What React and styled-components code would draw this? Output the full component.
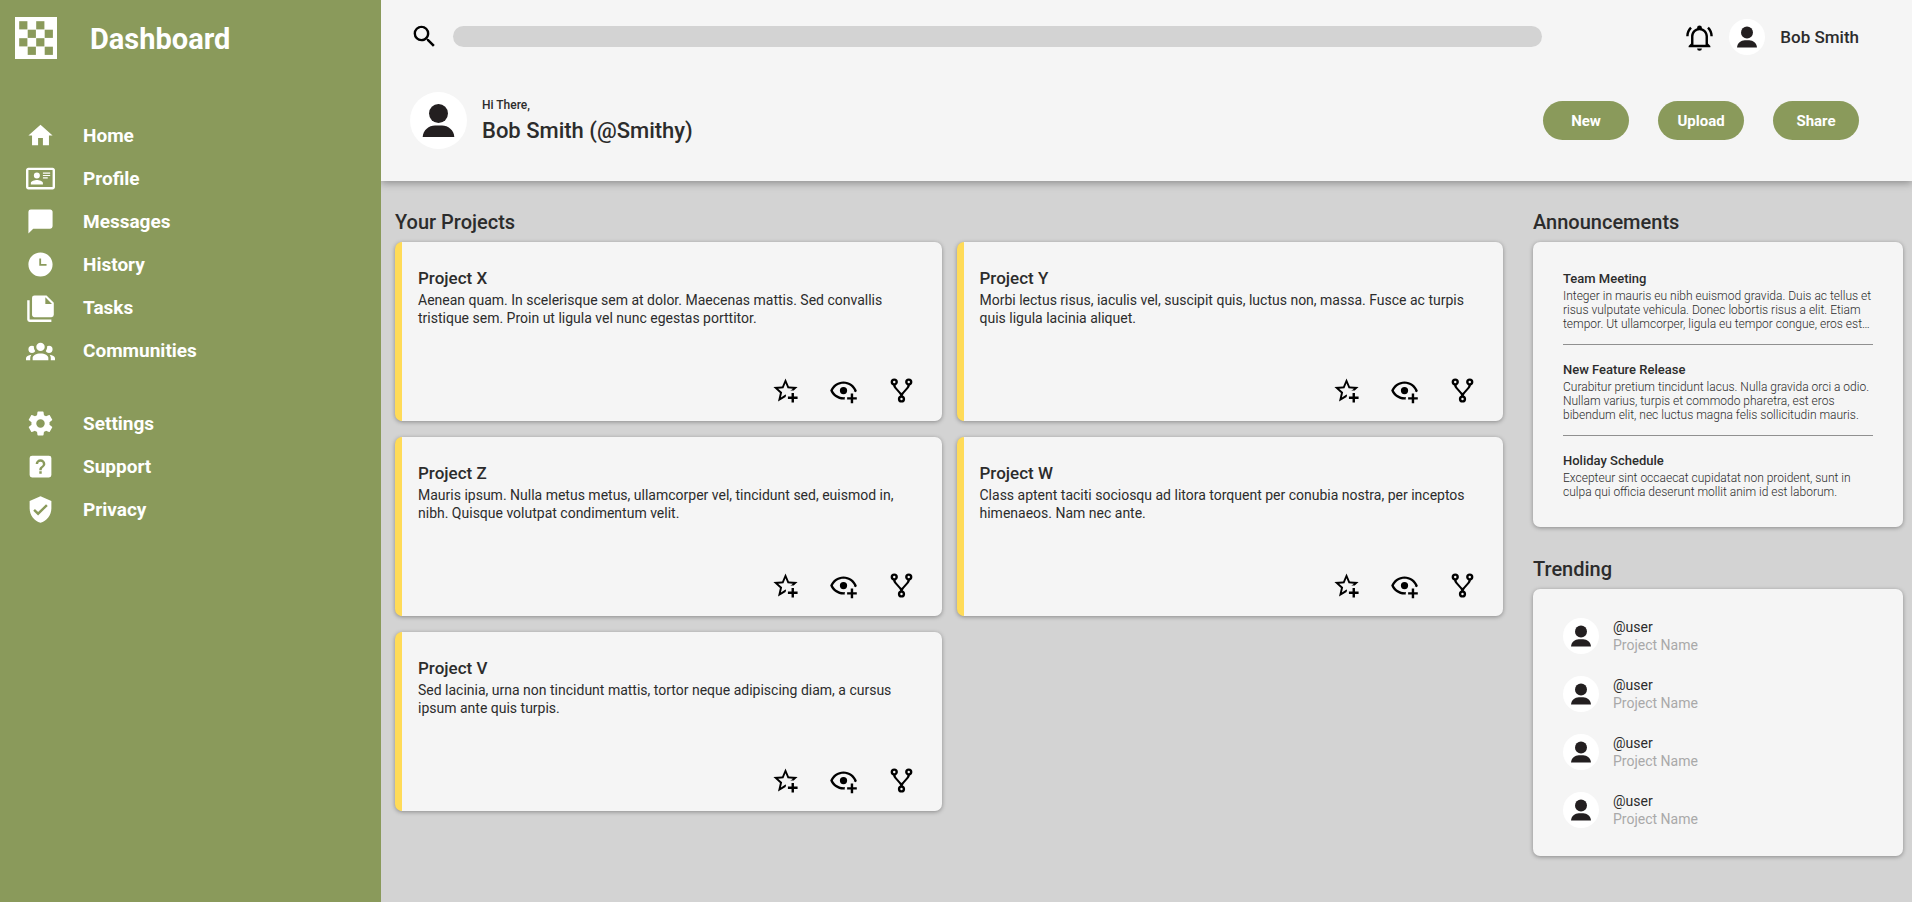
import React from "react";
import styled, { createGlobalStyle } from "styled-components";

const GlobalStyle = createGlobalStyle`
  *, *::before, *::after { box-sizing: border-box; }
  body {
    margin: 0;
    background: #d3d3d3;
    color: #2c2c2c;
    font-family: Roboto, "Liberation Sans", sans-serif;
    font-size: 14px;
  }
  h1, h2, h3, p, ul { margin: 0; padding: 0; }
  ul { list-style: none; }
  button { font: inherit; border: 0; padding: 0; background: none; color: inherit; cursor: pointer; }
`;

const paths = {
  home: "M10,20V14H14V20H19V12H22L12,3L2,12H5V20H10Z",
  profile:
    "M22,3H2C0.91,3.04 0.04,3.91 0,5V19C0.04,20.09 0.91,20.96 2,21H22C23.09,20.96 23.96,20.09 24,19V5C23.96,3.91 23.09,3.04 22,3M22,19H2V5H22V19M14,17V15.75C14,14.09 10.66,13.25 9,13.25C7.34,13.25 4,14.09 4,15.75V17H14M9,7A2.5,2.5 0 0,0 6.5,9.5A2.5,2.5 0 0,0 9,12A2.5,2.5 0 0,0 11.5,9.5A2.5,2.5 0 0,0 9,7M14,7V8H20V7H14M14,9V10H20V9H14M14,11V12H18V11H14",
  message: "M20,2H4A2,2 0 0,0 2,4V22L6,18H20A2,2 0 0,0 22,16V4C22,2.89 21.1,2 20,2Z",
  clock:
    "M12 2C6.5 2 2 6.5 2 12C2 17.5 6.5 22 12 22C17.5 22 22 17.5 22 12S17.5 2 12 2M17 13H11V7H12.5V11.5H17V13Z",
  tasks:
    "M16,9H21.5L16,3.5V9M7,2H17L23,8V18A2,2 0 0,1 21,20H7C5.89,20 5,19.1 5,18V4A2,2 0 0,1 7,2M3,6V22H21V24H3A2,2 0 0,1 1,22V6H3Z",
  group:
    "M12,5.5A3.5,3.5 0 0,1 15.5,9A3.5,3.5 0 0,1 12,12.5A3.5,3.5 0 0,1 8.5,9A3.5,3.5 0 0,1 12,5.5M5,8C5.56,8 6.08,8.15 6.53,8.42C6.38,9.85 6.8,11.27 7.66,12.38C7.16,13.34 6.16,14 5,14A3,3 0 0,1 2,11A3,3 0 0,1 5,8M19,8A3,3 0 0,1 22,11A3,3 0 0,1 19,14C17.84,14 16.84,13.34 16.34,12.38C17.2,11.27 17.62,9.85 17.47,8.42C17.92,8.15 18.44,8 19,8M5.5,18.25C5.5,16.18 8.41,14.5 12,14.5C15.59,14.5 18.5,16.18 18.5,18.25V20H5.5V18.25M0,20V18.5C0,17.11 1.89,15.94 4.45,15.6C3.86,16.28 3.5,17.22 3.5,18.25V20H0M24,20H20.5V18.25C20.5,17.22 20.14,16.28 19.55,15.6C22.11,15.94 24,17.11 24,18.5V20Z",
  cog: "M12,15.5A3.5,3.5 0 0,1 8.5,12A3.5,3.5 0 0,1 12,8.5A3.5,3.5 0 0,1 15.5,12A3.5,3.5 0 0,1 12,15.5M19.43,12.97C19.47,12.65 19.5,12.33 19.5,12C19.5,11.67 19.47,11.34 19.43,11L21.54,9.37C21.73,9.22 21.78,8.95 21.66,8.73L19.66,5.27C19.54,5.05 19.27,4.96 19.05,5.05L16.56,6.05C16.04,5.66 15.5,5.32 14.87,5.07L14.5,2.42C14.46,2.18 14.25,2 14,2H10C9.75,2 9.54,2.18 9.5,2.42L9.13,5.07C8.5,5.32 7.96,5.66 7.44,6.05L4.95,5.05C4.73,4.96 4.46,5.05 4.34,5.27L2.34,8.73C2.21,8.95 2.27,9.22 2.46,9.37L4.57,11C4.53,11.34 4.5,11.67 4.5,12C4.5,12.33 4.53,12.65 4.57,12.97L2.46,14.63C2.27,14.78 2.21,15.05 2.34,15.27L4.34,18.73C4.46,18.95 4.73,19.03 4.95,18.95L7.44,17.94C7.96,18.34 8.5,18.68 9.13,18.93L9.5,21.58C9.54,21.82 9.75,22 10,22H14C14.25,22 14.46,21.82 14.5,21.58L14.87,18.93C15.5,18.67 16.04,18.34 16.56,17.94L19.05,18.95C19.27,19.03 19.54,18.95 19.66,18.73L21.66,15.27C21.78,15.05 21.73,14.78 21.54,14.63L19.43,12.97Z",
  help: "M11,18H13V16H11V18M12,6A4,4 0 0,0 8,10H10A2,2 0 0,1 12,8A2,2 0 0,1 14,10C14,12 11,11.75 11,15H13C13,12.75 16,12.5 16,10A4,4 0 0,0 12,6M5,3H19A2,2 0 0,1 21,5V19A2,2 0 0,1 19,21H5A2,2 0 0,1 3,19V5A2,2 0 0,1 5,3Z",
  shield:
    "M10,17L6,13L7.41,11.59L10,14.17L16.59,7.58L18,9M12,1L3,5V11C3,16.55 6.84,21.74 12,23C17.16,21.74 21,16.55 21,11V5L12,1Z",
  search:
    "M9.5,3A6.5,6.5 0 0,1 16,9.5C16,11.11 15.41,12.59 14.44,13.73L14.71,14H15.5L20.5,19L19,20.5L14,15.5V14.71L13.73,14.44C12.59,15.41 11.11,16 9.5,16A6.5,6.5 0 0,1 3,9.5A6.5,6.5 0 0,1 9.5,3M9.5,5C7,5 5,7 5,9.5C5,12 7,14 9.5,14C12,14 14,12 14,9.5C14,7 12,5 9.5,5Z",
  bell: "M10,21H14A2,2 0 0,1 12,23A2,2 0 0,1 10,21M21,19V20H3V19L5,17V11C5,7.9 7.03,5.17 10,4.29C10,4.19 10,4.1 10,4A2,2 0 0,1 12,2A2,2 0 0,1 14,4C14,4.1 14,4.19 14,4.29C16.97,5.17 19,7.9 19,11V17L21,19M17,11A5,5 0 0,0 12,6A5,5 0 0,0 7,11V18H17V11M19.75,3.19L18.33,4.61C20.04,6.3 21,8.6 21,11H23C23,8.07 21.84,5.25 19.75,3.19M1,11H3C3,8.6 3.96,6.3 5.67,4.61L4.25,3.19C2.16,5.25 1,8.07 1,11Z",
  star: "M5.8 21L7.4 14L2 9.2L9.2 8.6L12 2L14.8 8.6L22 9.2L18.8 12H18C17.3 12 16.6 12.1 15.9 12.4L18.1 10.5L13.7 10.1L12 6.1L10.3 10.1L5.9 10.5L9.2 13.4L8.2 17.7L12 15.4L12.5 15.7C12.3 16.2 12.1 16.8 12.1 17.3L5.8 21M17 14V17H14V19H17V22H19V19H22V17H19V14H17Z",
  eye: "M12,4.5C7,4.5 2.73,7.61 1,12C2.73,16.39 7,19.5 12,19.5C12.36,19.5 12.72,19.5 13.08,19.45C13.03,19.13 13,18.82 13,18.5C13,18.14 13.04,17.78 13.1,17.42C12.74,17.46 12.37,17.5 12,17.5C8.24,17.5 4.83,15.36 3.18,12C4.83,8.64 8.24,6.5 12,6.5C15.76,6.5 19.17,8.64 20.82,12C20.7,12.24 20.56,12.45 20.43,12.68C21.09,12.84 21.72,13.11 22.29,13.5C22.56,13 22.8,12.5 23,12C21.27,7.61 17,4.5 12,4.5M12,9A3,3 0 0,0 9,12A3,3 0 0,0 12,15A3,3 0 0,0 15,12A3,3 0 0,0 12,9M18,14.5V17.5H15V19.5H18V22.5H20V19.5H23V17.5H20V14.5H18Z",
  fork: "M6,2A3,3 0 0,1 9,5C9,6.28 8.19,7.38 7.06,7.81C7.15,8.27 7.39,8.83 8,9.63C9,10.92 11,12.83 12,14.17C13,12.83 15,10.92 16,9.63C16.61,8.83 16.85,8.27 16.94,7.81C15.81,7.38 15,6.28 15,5A3,3 0 0,1 18,2A3,3 0 0,1 21,5C21,6.32 20.14,7.45 18.95,7.85C18.87,8.37 18.64,9 18,9.83C17,11.17 15,13.08 14,14.38C13.39,15.17 13.15,15.73 13.06,16.19C14.19,16.62 15,17.72 15,19A3,3 0 0,1 12,22A3,3 0 0,1 9,19C9,17.72 9.81,16.62 10.94,16.19C10.85,15.73 10.61,15.17 10,14.38C9,13.08 7,11.17 6,9.83C5.36,9 5.13,8.37 5.05,7.85C3.86,7.45 3,6.32 3,5A3,3 0 0,1 6,2M6,4A1,1 0 0,0 5,5A1,1 0 0,0 6,6A1,1 0 0,0 7,5A1,1 0 0,0 6,4M18,4A1,1 0 0,0 17,5A1,1 0 0,0 18,6A1,1 0 0,0 19,5A1,1 0 0,0 18,4M12,18A1,1 0 0,0 11,19A1,1 0 0,0 12,20A1,1 0 0,0 13,19A1,1 0 0,0 12,18Z",
};

const Svg = styled.svg`
  display: block;
  flex: none;
  width: 29px;
  height: 29px;
  fill: currentColor;
  fill-rule: evenodd;
`;

const Icon = ({ name }) => (
  <Svg viewBox="0 0 24 24" aria-hidden="true">
    <path d={paths[name]} />
  </Svg>
);

const Page = styled.div`
  display: flex;
  min-height: 100vh;
`;

const Sidebar = styled.aside`
  flex: 0 0 381px;
  background: #8a9a5b;
  color: #fff;
`;

const Brand = styled.div`
  display: flex;
  align-items: flex-start;
  gap: 33px;
  padding: 17px 15px 0;
`;

const Logo = styled.svg`
  display: block;
  width: 42px;
  height: 42px;
`;

const BrandName = styled.h1`
  font-size: 29px;
  line-height: 44px;
  font-weight: 700;
`;

const Nav = styled.nav`
  display: flex;
  flex-direction: column;
  gap: 44px;
  padding: 60px 26px;
`;

const NavGroup = styled.ul`
  display: flex;
  flex-direction: column;
  gap: 14px;
`;

const NavLink = styled.a`
  display: flex;
  align-items: center;
  gap: 28px;
  color: inherit;
  font-size: 19px;
  line-height: 29px;
  font-weight: 700;
  text-decoration: none;
`;

const Main = styled.main`
  flex: 1;
  min-width: 0;
`;

const Header = styled.header`
  position: relative;
  padding: 19px 53px 32px 29px;
  background: #f5f5f5;
  box-shadow: 0 2px 8px rgba(0, 0, 0, 0.35);
  clip-path: inset(0 0 -20px 0);
`;

const TopBar = styled.div`
  display: flex;
  align-items: flex-start;
  justify-content: space-between;
  gap: 29px;
`;

const Search = styled.label`
  display: flex;
  flex: 0 1 1132px;
  align-items: center;
  gap: 14px;
  height: 35px;
  color: #000;
`;

const SearchInput = styled.input`
  flex: 1;
  min-width: 0;
  height: 21px;
  padding: 0 14px;
  border: 0;
  border-radius: 14px;
  background: #d3d3d3;
  font: inherit;
`;

const UserArea = styled.div`
  display: flex;
  align-items: center;
  gap: 15px;
  font-size: 17px;
  font-weight: 500;
`;

const BellButton = styled.button`
  color: #000;
`;

const Avatar = styled.span`
  display: block;
  flex: none;
  width: ${(p) => p.$size}px;
  height: ${(p) => p.$size}px;
  border-radius: 50%;
  background: #fff;
`;

const User = ({ size }) => (
  <Avatar $size={size}>
    <svg viewBox="0 0 57 57" width={size} height={size} fill="#231f20" aria-hidden="true">
      <circle cx="28.5" cy="21.5" r="9.5" />
      <path d="M12.7 45C13 38 19 33.500 25 33.500H32C38 33.500 44 38 44.300 45Z" />
    </svg>
  </Avatar>
);

const GreetingBar = styled.div`
  display: flex;
  align-items: center;
  justify-content: space-between;
  margin-top: 37px;
`;

const Greeting = styled.div`
  display: flex;
  align-items: center;
  gap: 15px;
`;

const Hello = styled.p`
  padding-top: 5px;
  font-size: 12px;
  line-height: 16px;
  font-weight: 500;
`;

const FullName = styled.h2`
  font-size: 22px;
  line-height: 36px;
  font-weight: 500;
`;

const Actions = styled.div`
  display: flex;
  gap: 29px;
`;

const ActionButton = styled.button`
  width: 86px;
  height: 39px;
  border-radius: 20px;
  background: #8a9a5b;
  color: #fff;
  font-size: 15px;
  font-weight: 700;
`;

const Content = styled.div`
  display: flex;
  align-items: flex-start;
  gap: 30px;
  padding: 26px 9px 29px 14px;
`;

const Projects = styled.section`
  flex: 1;
  min-width: 0;
`;

const Aside = styled.div`
  display: flex;
  flex: 0 0 370px;
  flex-direction: column;
  gap: 27px;
`;

const SectionTitle = styled.h2`
  padding-bottom: 5px;
  font-size: 20px;
  line-height: 30px;
  font-weight: 500;
`;

const CardGrid = styled.div`
  display: grid;
  grid-template-columns: 1fr 1fr;
  gap: 16px 15px;
`;

const Card = styled.article`
  border-radius: 7px;
  background: #f5f5f5;
  box-shadow: 0 1px 4px rgba(0, 0, 0, 0.35);
`;

const ProjectCard = styled(Card)`
  display: flex;
  flex-direction: column;
  justify-content: space-between;
  min-height: 179px;
  padding: 25px 16px 16px;
  border-left: 7px solid #ffdb58;
`;

const ProjectTitle = styled.h3`
  padding-bottom: 2px;
  font-size: 17px;
  line-height: 22px;
  font-weight: 500;
`;

const ProjectText = styled.p`
  font-size: 14px;
  line-height: 18px;
`;

const CardActions = styled.div`
  display: flex;
  justify-content: flex-end;
  gap: 29px;
  padding-right: 10px;
  color: #000;
`;

const Announcements = styled(Card)`
  padding: 27px 30px 28px;
`;

const Announcement = styled.div`
  & + & {
    margin-top: 13px;
    padding-top: 15px;
    border-top: 1px solid #909090;
  }
`;

const AnnouncementTitle = styled.h3`
  padding-bottom: 1px;
  font-size: 13px;
  line-height: 19px;
  font-weight: 500;
`;

const AnnouncementText = styled.p`
  font-size: 12px;
  line-height: 14px;
  font-weight: 300;
`;

const Trending = styled(Card)`
  display: flex;
  flex-direction: column;
  gap: 22px;
  padding: 29px 30px 28px;
`;

const TrendRow = styled.div`
  display: flex;
  align-items: center;
  gap: 14px;
  font-size: 14px;
  line-height: 18px;
`;

const Muted = styled.p`
  color: #a9a9a9;
`;

const navGroups = [
  [
    ["home", "Home"],
    ["profile", "Profile"],
    ["message", "Messages"],
    ["clock", "History"],
    ["tasks", "Tasks"],
    ["group", "Communities"],
  ],
  [
    ["cog", "Settings"],
    ["help", "Support"],
    ["shield", "Privacy"],
  ],
];

const projects = [
  ["Project X", "Aenean quam. In scelerisque sem at dolor. Maecenas mattis. Sed convallis tristique sem. Proin ut ligula vel nunc egestas porttitor."],
  ["Project Y", "Morbi lectus risus, iaculis vel, suscipit quis, luctus non, massa. Fusce ac turpis quis ligula lacinia aliquet."],
  ["Project Z", "Mauris ipsum. Nulla metus metus, ullamcorper vel, tincidunt sed, euismod in, nibh. Quisque volutpat condimentum velit."],
  ["Project W", "Class aptent taciti sociosqu ad litora torquent per conubia nostra, per inceptos himenaeos. Nam nec ante."],
  ["Project V", "Sed lacinia, urna non tincidunt mattis, tortor neque adipiscing diam, a cursus ipsum ante quis turpis."],
];

const announcements = [
  ["Team Meeting", "Integer in mauris eu nibh euismod gravida. Duis ac tellus et risus vulputate vehicula. Donec lobortis risus a elit. Etiam tempor. Ut ullamcorper, ligula eu tempor congue, eros est…"],
  ["New Feature Release", "Curabitur pretium tincidunt lacus. Nulla gravida orci a odio. Nullam varius, turpis et commodo pharetra, est eros bibendum elit, nec luctus magna felis sollicitudin mauris."],
  ["Holiday Schedule", "Excepteur sint occaecat cupidatat non proident, sunt in culpa qui officia deserunt mollit anim id est laborum."],
];

const cells = [[0, 0], [2, 0], [1, 1], [3, 1], [0, 2], [2, 2], [1, 3], [3, 3]];

export default function App() {
  return (
    <>
      <GlobalStyle />
      <Page>
        <Sidebar>
          <Brand>
            <Logo viewBox="0 0 42 42" aria-hidden="true">
              <rect width="42" height="42" fill="#fff" />
              {cells.map(([x, y]) => (
                <rect key={`${x}-${y}`} x={4.2 + x * 8.5} y={4.2 + y * 8.5} width="8.2" height="8.2" fill="#8a9a5b" />
              ))}
            </Logo>
            <BrandName>Dashboard</BrandName>
          </Brand>
          <Nav aria-label="Main">
            {navGroups.map((group, i) => (
              <NavGroup key={i}>
                {group.map(([icon, label]) => (
                  <li key={label}>
                    <NavLink href="#">
                      <Icon name={icon} />
                      {label}
                    </NavLink>
                  </li>
                ))}
              </NavGroup>
            ))}
          </Nav>
        </Sidebar>
        <Main>
          <Header>
            <TopBar>
              <Search>
                <Icon name="search" />
                <SearchInput type="search" aria-label="Search" />
              </Search>
              <UserArea>
                <BellButton type="button" aria-label="Notifications">
                  <Icon name="bell" />
                </BellButton>
                <User size={36} />
                <span>Bob Smith</span>
              </UserArea>
            </TopBar>
            <GreetingBar>
              <Greeting>
                <User size={57} />
                <div>
                  <Hello>Hi There,</Hello>
                  <FullName>Bob Smith (@Smithy)</FullName>
                </div>
              </Greeting>
              <Actions>
                {["New", "Upload", "Share"].map((label) => (
                  <ActionButton key={label} type="button">
                    {label}
                  </ActionButton>
                ))}
              </Actions>
            </GreetingBar>
          </Header>
          <Content>
            <Projects>
              <SectionTitle>Your Projects</SectionTitle>
              <CardGrid>
                {projects.map(([title, text]) => (
                  <ProjectCard key={title}>
                    <div>
                      <ProjectTitle>{title}</ProjectTitle>
                      <ProjectText>{text}</ProjectText>
                    </div>
                    <CardActions>
                      <button type="button" aria-label="Star">
                        <Icon name="star" />
                      </button>
                      <button type="button" aria-label="Watch">
                        <Icon name="eye" />
                      </button>
                      <button type="button" aria-label="Fork">
                        <Icon name="fork" />
                      </button>
                    </CardActions>
                  </ProjectCard>
                ))}
              </CardGrid>
            </Projects>
            <Aside>
              <section>
                <SectionTitle>Announcements</SectionTitle>
                <Announcements>
                  {announcements.map(([title, text]) => (
                    <Announcement key={title}>
                      <AnnouncementTitle>{title}</AnnouncementTitle>
                      <AnnouncementText>{text}</AnnouncementText>
                    </Announcement>
                  ))}
                </Announcements>
              </section>
              <section>
                <SectionTitle>Trending</SectionTitle>
                <Trending>
                  {[0, 1, 2, 3].map((n) => (
                    <TrendRow key={n}>
                      <User size={36} />
                      <div>
                        <p>@user</p>
                        <Muted>Project Name</Muted>
                      </div>
                    </TrendRow>
                  ))}
                </Trending>
              </section>
            </Aside>
          </Content>
        </Main>
      </Page>
    </>
  );
}
